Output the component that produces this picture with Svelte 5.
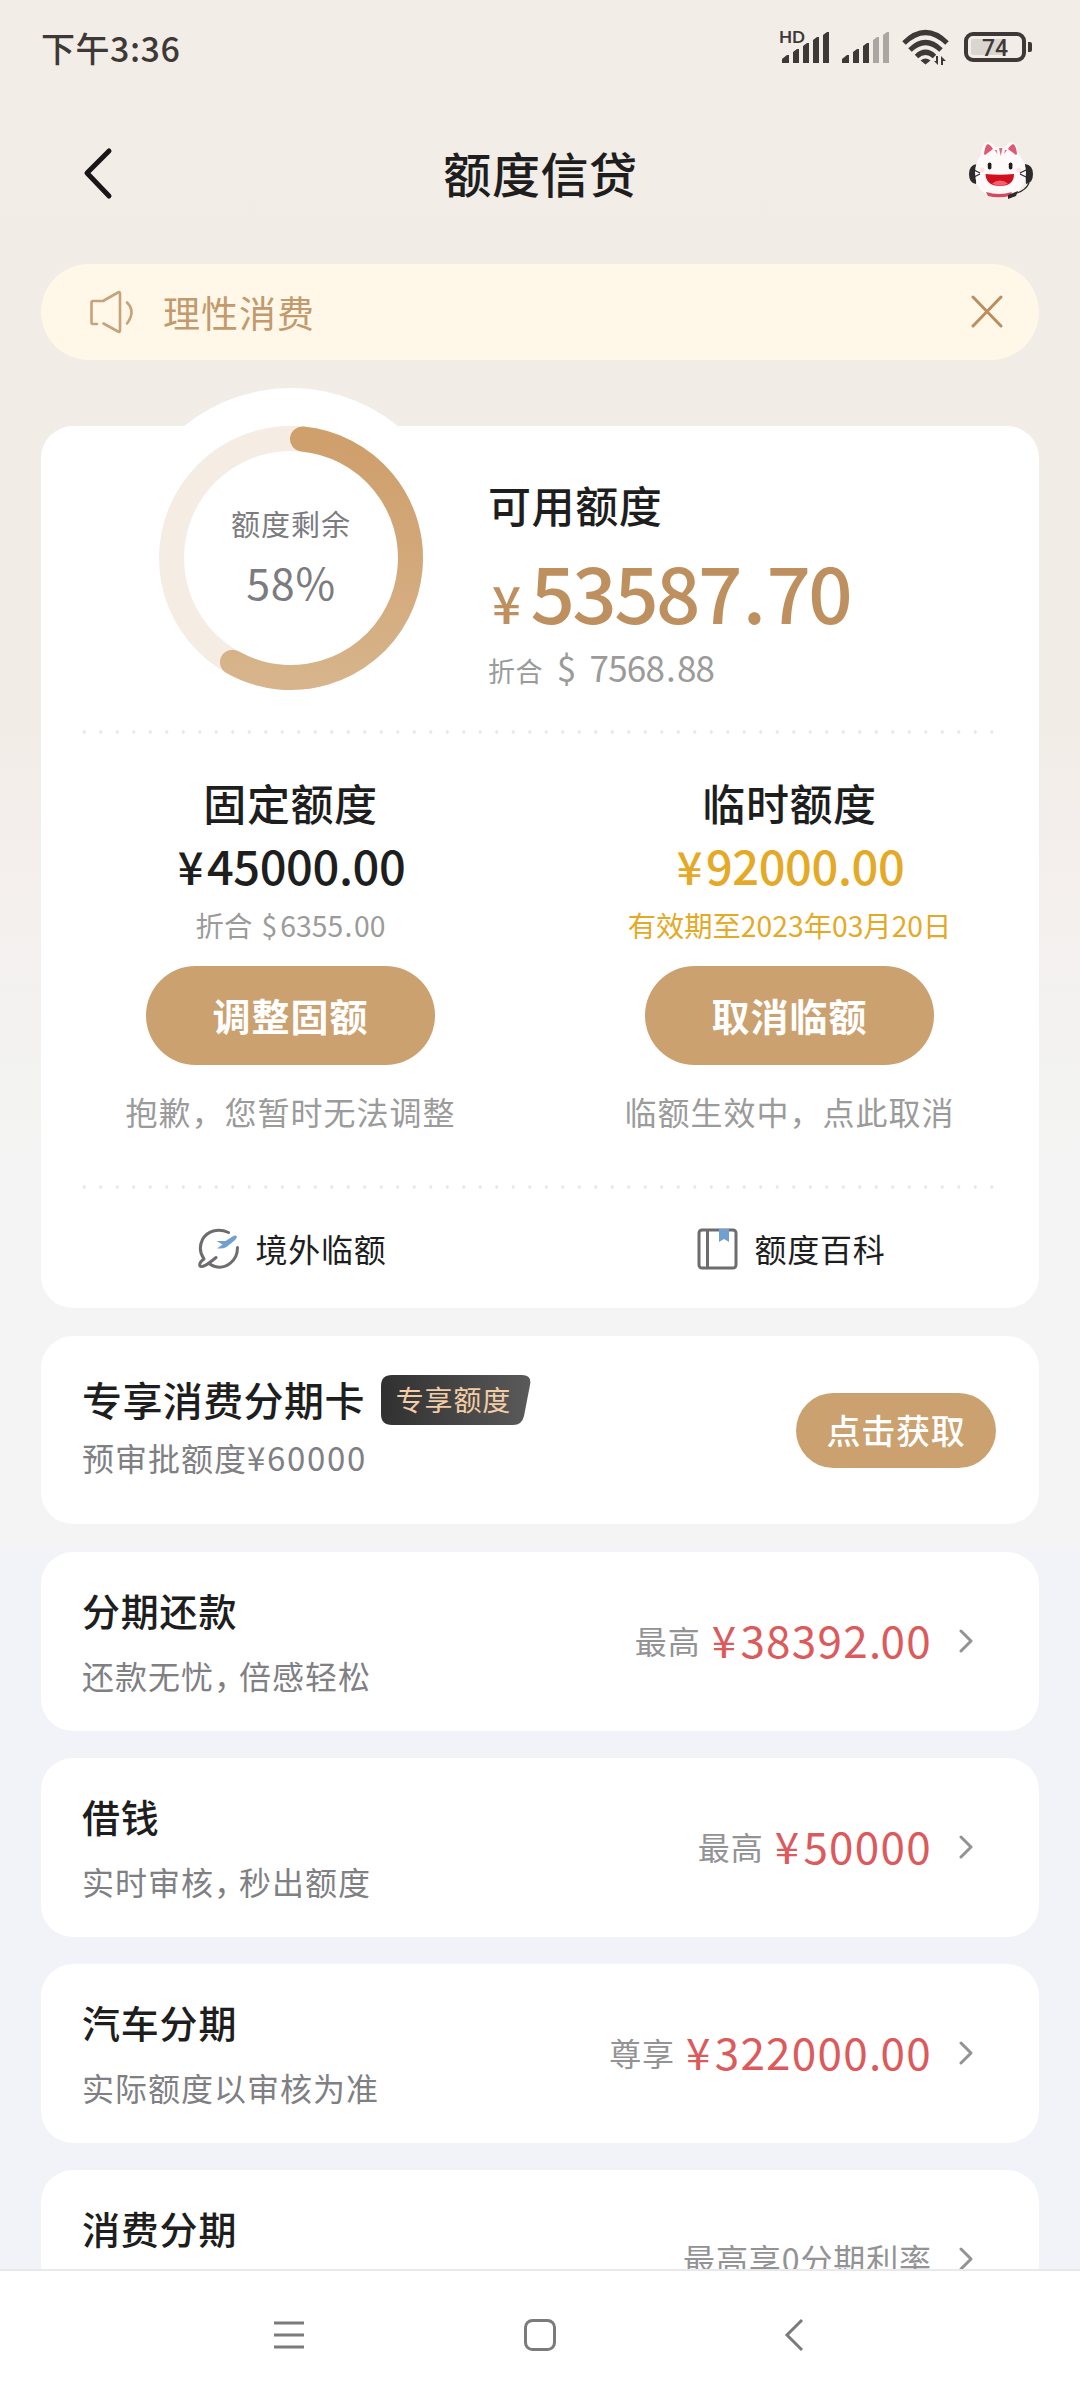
<script>
  const percent = 58;
  const radius = 119.5;
  const circumference = 2 * Math.PI * radius;

  const limits = [
    {
      title: "固定额度",
      value: "45000.00",
      note: "折合 ",
      usd: "6355.00",
      action: "调整固额",
      hint: "抱歉，您暂时无法调整",
      temporary: false,
    },
    {
      title: "临时额度",
      value: "92000.00",
      note: "有效期至2023年03月20日",
      usd: "",
      action: "取消临额",
      hint: "临额生效中，点此取消",
      temporary: true,
    },
  ];

  const products = [
    { title: "分期还款", note: "还款无忧，倍感轻松", label: "最高", value: "38392.00" },
    { title: "借钱", note: "实时审核，秒出额度", label: "最高", value: "50000" },
    { title: "汽车分期", note: "实际额度以审核为准", label: "尊享", value: "322000.00" },
    { title: "消费分期", note: "", label: "最高享0分期利率", value: "" },
  ];
</script>

{#snippet money(sign, value)}
  {@const parts = value.split(".")}
  <span class="sign">{sign}</span><span>{parts[0]}</span>{#if parts[1]}<span class="dot">.</span><span>{parts[1]}</span>{/if}
{/snippet}

<div class="screen">
  <div class="status">
    <span class="time">下午3:36</span>
    <svg class="status-icons" width="254" height="36" viewBox="0 0 254 36" fill="#3e3937">
      <text x="-1" y="15" class="hd">HD</text>
      <path d="M2 35v-4l5-4h2v8zM13 35v-11l4-3h2v14zM23 35v-17l4-3h2v20zM33 35v-23l4-3h2v26zM43 35v-28l4-3h2v31z" />
      <path d="M62 35v-4l5-4h2v8zM73 35v-11l4-3h2v14zM83 35v-17l4-3h2v20z" />
      <path fill="#aaa6a2" d="M93 35v-23l4-3h2v26zM103 35v-28l4-3h2v31z" />
      <g fill="none" stroke="#3e3937" stroke-width="5">
        <path d="M124 15q21.500-21 43 0M130 22q15.500-15 31 0M136.500 28.500q9-8.500 18 0" />
      </g>
      <path d="M140.500 32.500q5-4 10 0l-5 4zM158 28v9l-4-4h2v-5zM161 37v-9l5 5h-3v4z" />
      <rect x="186" y="6" width="58" height="26" rx="7" fill="none" stroke="#3e3937" stroke-width="4" />
      <rect x="191" y="11" width="35" height="16" rx="2" fill="#d9d6d2" />
      <path d="M248 14h2q2 0 2 2v6q0 2-2 2h-2z" />
      <text x="215" y="27.500" text-anchor="middle" class="level">74</text>
    </svg>
  </div>

  <header>
    <svg width="36" height="60" viewBox="0 0 36 60" fill="none" stroke="#191617" stroke-width="5" stroke-linecap="round" stroke-linejoin="round">
      <path d="M29 9L7 31L29 54" />
    </svg>
    <h1>额度信贷</h1>
    <svg width="64" height="60" viewBox="0 0 64 60">
      <path d="M8 22q-8 1-8 10t7 10zM56 22q8 1 8 10t-7 10z" fill="#2d2a2c" />
      <path d="M12 13Q13 0 19 0q5 1 7 5h10q3-4 6-5q7 1 8 13q7 8 7 18q-2 24-26 24T6 31q0-10 6-18z" fill="#fffafa" />
      <path d="M15 12q1-9 4-10q4 2 5 5l-8 6zM48 12q-1-9-4-10q-4 2-5 5l8 6z" fill="#df5972" />
      <path d="M30 6h3.500l-1.700 8zM25.500 8l2 0 1 4zM38 8l-2 0-1 4z" fill="#d96f80" />
      <rect x="18.800" y="20.500" width="3.600" height="7" rx="1.800" fill="#211b1d" />
      <rect x="39.800" y="20.500" width="3.600" height="7" rx="1.800" fill="#211b1d" />
      <circle cx="13" cy="28" r="2.500" fill="#fde3e5" />
      <circle cx="50" cy="28" r="2.500" fill="#fde3e5" />
      <path d="M16.500 32q14 1.500 28.500 0q0 12-14 12T16.500 32z" fill="#d0101f" />
      <path d="M23 41.500q8-6 16 0q-8 4.500-16 0z" fill="#f4606f" />
      <path d="M17 50q13 4 26 0l-2 4q-12 2.500-22 0z" fill="#d84861" />
      <path d="M5 28l6 3M5 35l6-3M57 28l-6 3M57 35l-6-3M60 41q-3 7-12 10" fill="none" stroke="#2d2a2c" stroke-width="1.300" />
      <path d="M39 53l10-4-2 5-8 3z" fill="#2d2a2c" />
    </svg>
  </header>

  <div class="notice">
    <svg width="46" height="44" viewBox="0 0 46 44" fill="none" stroke="#c7a27a" stroke-width="2.600" stroke-linecap="round" stroke-linejoin="round">
      <path d="M9 34H5q-1.500 0-1.500-1.500v-20Q3.500 11 5 11h10L30 2.500q2-1 2 1v37q0 2-2 1L15.500 33.500M39 12.500q9 9 0 21" />
    </svg>
    <span>理性消费</span>
    <svg width="34" height="34" viewBox="0 0 34 34" stroke="#bd8e5d" stroke-width="3" stroke-linecap="round">
      <path d="M3 2L31 31M31 2L3 31" />
    </svg>
  </div>

  <section class="card credit">
    <div class="overview">
      <div class="ring">
        <svg width="340" height="340" viewBox="0 0 340 340">
          <defs>
            <linearGradient id="gold" x1="0" y1="0" x2="1" y2="0">
              <stop offset="0" stop-color="#d7b48b" />
              <stop offset="1" stop-color="#cf9f6c" />
            </linearGradient>
          </defs>
          <circle cx="170" cy="170" r="170" fill="#fff" />
          <circle cx="170" cy="170" r={radius} fill="none" stroke="#f5ece4" stroke-width="25" />
          <circle
            cx="170"
            cy="170"
            r={radius}
            fill="none"
            stroke="url(#gold)"
            stroke-width="25"
            stroke-linecap="round"
            stroke-dasharray="{(circumference * (percent - 1.4)) / 100} {circumference}"
            transform="rotate(-84.500 170 170)"
          />
        </svg>
        <div class="ring-text">
          <span>额度剩余</span>
          <strong>{percent}%</strong>
        </div>
      </div>
      <div class="available">
        <h2>可用额度</h2>
        <p class="total">{@render money("¥", "53587.70")}</p>
        <p class="usd">折合 <b>{@render money("$", "7568.88")}</b></p>
      </div>
    </div>

    <div class="dots"></div>

    <div class="limits">
      {#each limits as limit}
        <div class="limit" class:temporary={limit.temporary}>
          <h2>{limit.title}</h2>
          <p class="value">{@render money("¥", limit.value)}</p>
          <p class="note">{limit.note}{#if limit.usd}{@render money("$", limit.usd)}{/if}</p>
          <button>{limit.action}</button>
          <p class="hint">{limit.hint}</p>
        </div>
      {/each}
    </div>

    <div class="dots"></div>

    <div class="links">
      <div class="link">
        <svg width="42" height="42" viewBox="0 0 42 42" fill="none" stroke="#6d6d70" stroke-width="3" stroke-linecap="round">
          <path d="M30.500 4.500C20-.5 9 3 4.500 11.500Q-.5 22 6 31M39.500 19.500C39.500 33 28 41.500 17 38.500Q13.500 37.500 10.500 35M6 31Q.5 35 2 38Q4.500 41 18 29.500" />
          <path d="M39 8.500q-.5 3-5 6l-5.500 4.500q-3 2-9.500 1.500l5.500-4-6-3.500h9l7-4.500q3-2 4.500 0z" fill="#729fd0" stroke="none" />
        </svg>
        <span>境外临额</span>
      </div>
      <div class="link">
        <svg width="42" height="44" viewBox="0 0 42 44" fill="none" stroke="#6d6d70" stroke-width="3">
          <rect x="2" y="3" width="37" height="38" rx="3" />
          <path d="M10.500 3v38" />
          <path d="M22 2h10v13l-5-3-5 3z" fill="#729fd0" stroke="none" />
        </svg>
        <span>额度百科</span>
      </div>
    </div>
  </section>

  <section class="card offer">
    <div>
      <div class="offer-head">
        <h3>专享消费分期卡</h3>
        <span class="badge">
          <svg width="150" height="50" viewBox="0 0 150 50">
            <defs>
              <linearGradient id="dark">
                <stop offset="0" stop-color="#303030" />
                <stop offset="1" stop-color="#5a5a5a" />
              </linearGradient>
            </defs>
            <path d="M11 0H141Q151 0 149 10L143 41Q141 50 132 50H11Q0 50 0 39V11Q0 0 11 0z" fill="url(#dark)" />
          </svg>
          <em>专享额度</em>
        </span>
      </div>
      <p>预审批额度<span class="preset">¥60000</span></p>
    </div>
    <button>点击获取</button>
  </section>

  {#each products as item}
    <section class="card product">
      <div class="info">
        <h3>{item.title}</h3>
        <p>{#each item.note.split("，") as part, i}{#if i}<i>，</i>{/if}{part}{/each}</p>
      </div>
      <span class="label">{item.label}</span>
      {#if item.value}
        <span class="price">{@render money("¥", item.value)}</span>
      {/if}
      <svg width="16" height="26" viewBox="0 0 16 26" fill="none" stroke="#939396" stroke-width="3" stroke-linecap="round" stroke-linejoin="round">
        <path d="M3 2L13 12L3 22" />
      </svg>
    </section>
  {/each}

  <nav>
    <svg width="32" height="34" viewBox="0 0 32 34" stroke="#7b7b7b" stroke-width="3">
      <path d="M1 5H31M1 17H31M1 29H31" />
    </svg>
    <svg class="home" width="34" height="34" viewBox="0 0 34 34" fill="none" stroke="#7b7b7b" stroke-width="3">
      <rect x="2.500" y="2.500" width="29" height="29" rx="7" />
    </svg>
    <svg width="20" height="34" viewBox="0 0 20 34" fill="none" stroke="#7b7b7b" stroke-width="3">
      <path d="M18 2L3 17L18 32" />
    </svg>
  </nav>
</div>

<style>
  :global(body) {
    margin: 0;
    background: #fff;
  }

  .screen {
    width: 1080px;
    height: 2400px;
    position: relative;
    overflow: hidden;
    box-sizing: border-box;
    padding: 0 41px;
    font-family: "Noto Sans CJK SC", sans-serif;
    color: #1e1e1e;
    background: linear-gradient(#f2ede7 0, #f1ece5 700px, #f4efed 860px, #f3f3f2 1080px, #f4f4f4 1200px, #f4f4f4 1540px, #f2f3f8 1556px);
  }

  h1, h2, h3, p {
    margin: 0;
    font-weight: 500;
    white-space: nowrap;
  }

  svg {
    display: block;
    flex: none;
  }

  button {
    border: none;
    padding: 0 0 2px;
    font-family: inherit;
    color: #fff;
    background: #cba170;
  }

  .status {
    height: 100px;
    display: flex;
    justify-content: space-between;
    box-sizing: border-box;
    padding-top: 28px;
  }

  .time {
    font-size: 34px;
    line-height: 40px;
    font-weight: 500;
    letter-spacing: 0.500px;
    color: #3e3937;
  }

  .status-icons {
    margin-right: 5px;
    overflow: visible;
  }

  .hd {
    font: 700 17px Lato, sans-serif;
  }

  .level {
    font: 500 23px Roboto, sans-serif;
  }

  header {
    height: 150px;
    display: flex;
    align-items: center;
    justify-content: space-between;
    box-sizing: border-box;
    padding: 0 6px 7px 39px;
  }

  header h1 {
    font-size: 48px;
    line-height: 60px;
    letter-spacing: 0.600px;
    margin: 0 4px 0 0;
  }

  .notice {
    height: 96px;
    margin-top: 14px;
    border-radius: 48px;
    background: #fff8e8;
    display: flex;
    align-items: center;
    padding: 0 35px 0 47px;
    color: #c39a6d;
    font-size: 37px;
  }

  .notice span {
    flex: 1;
    margin-left: 29px;
    letter-spacing: 1px;
  }

  .card {
    background: #fff;
    border-radius: 32px;
    box-sizing: border-box;
  }

  .credit {
    height: 882px;
    margin-top: 66px;
  }

  .overview {
    height: 304px;
    display: flex;
  }

  .ring {
    position: relative;
    width: 340px;
    margin: -38px 0 0 80px;
  }

  .ring-text {
    position: absolute;
    left: 0;
    top: 114px;
    width: 340px;
    display: flex;
    flex-direction: column;
    align-items: center;
    color: #7b7b80;
  }

  .ring-text span {
    font-size: 29px;
    line-height: 42px;
    letter-spacing: 1px;
  }

  .ring-text strong {
    font-size: 43px;
    line-height: 60px;
    margin-top: 7px;
    font-weight: 400;
    letter-spacing: 0.800px;
  }

  .available {
    margin-left: 27px;
    padding-top: 48px;
  }

  h2 {
    font-size: 43px;
    line-height: 60px;
    letter-spacing: 0.600px;
  }

  .total {
    font-size: 78px;
    line-height: 80px;
    margin-top: 16px;
    letter-spacing: -2.600px;
    color: #be905f;
  }

  .total .sign {
    font-size: 51px;
    margin: 0 12px 0 4px;
  }

  .total .dot {
    margin: 0 3px;
  }

  .usd {
    font-size: 27px;
    line-height: 40px;
    margin-top: 5px;
    letter-spacing: 0.600px;
    color: #9b9b9b;
    font-weight: 400;
  }

  .usd b {
    font-weight: 400;
    font-size: 35px;
    letter-spacing: -0.800px;
  }

  .usd .sign {
    margin: 0 14px 0 7px;
  }

  .usd .dot {
    margin: 0 2px;
  }

  .dots {
    height: 4px;
    margin: 0 35px;
    background: radial-gradient(circle, #e9e9e9 1.500px, transparent 2px) 0 0 / 16.500px 4px;
  }

  .limits {
    height: 451px;
    display: grid;
    grid-template-columns: 1fr 1fr;
  }

  .limit {
    display: flex;
    flex-direction: column;
    align-items: center;
    padding-top: 38px;
  }

  .value {
    font-size: 47px;
    line-height: 60px;
    margin-top: 3px;
    letter-spacing: -0.400px;
  }

  .value .sign {
    font-size: 45px;
    margin: 0 4px 0 2px;
  }

  .note {
    font-size: 28.300px;
    line-height: 40px;
    margin-top: 9px;
    font-weight: 400;
    color: #9b9b9b;
  }

  .note .sign {
    margin: 0 3px;
  }

  .note .dot {
    margin: 0 1.500px;
  }

  .temporary .value,
  .temporary .note {
    color: #e4aa27;
  }

  .limit button {
    width: 289px;
    height: 99px;
    border-radius: 50px;
    margin-top: 21px;
    font-size: 38px;
    font-weight: 700;
    letter-spacing: 1px;
  }

  .hint {
    font-size: 32px;
    line-height: 48px;
    margin-top: 22px;
    letter-spacing: 1px;
    font-weight: 400;
    color: #9b9b9b;
  }

  .links {
    display: grid;
    grid-template-columns: 1fr 1fr;
    padding-top: 37px;
  }

  .link {
    display: flex;
    align-items: center;
    justify-content: center;
    gap: 16px;
    padding-left: 3px;
    font-size: 32px;
    line-height: 48px;
    letter-spacing: 0.700px;
  }

  .link span {
    margin-top: -2px;
  }

  .offer {
    height: 188px;
    margin: 28px 0;
    padding: 0 43px 0 41px;
    display: flex;
    align-items: center;
    justify-content: space-between;
  }

  .offer-head {
    display: flex;
    align-items: center;
    gap: 16px;
    margin: -8px 0 4px;
  }

  .offer h3 {
    font-size: 40px;
    line-height: 60px;
    margin-top: -2px;
    letter-spacing: 0.400px;
  }

  .badge {
    position: relative;
  }

  .badge em {
    position: absolute;
    left: 15px;
    top: 4px;
    font-size: 28px;
    line-height: 40px;
    letter-spacing: 0.800px;
    font-style: normal;
    white-space: nowrap;
    color: #f2cda5;
  }

  .offer p,
  .info p {
    font-size: 32px;
    line-height: 48px;
    letter-spacing: 1px;
    font-weight: 400;
    color: #7f7f84;
  }

  .offer .preset {
    font-size: 33px;
    letter-spacing: 1.700px;
  }

  .offer button {
    width: 200px;
    height: 75px;
    border-radius: 38px;
    font-size: 34px;
    font-weight: 500;
    letter-spacing: 0.800px;
  }

  .product {
    height: 179px;
    margin-bottom: 27px;
    padding: 0 65px 0 41px;
    display: flex;
    align-items: center;
  }

  .info {
    flex: 1;
    align-self: flex-start;
    padding-top: 28px;
  }

  .info h3 {
    font-size: 38px;
    line-height: 60px;
    letter-spacing: 0.800px;
  }

  .info p {
    margin-top: 11px;
  }

  .info i {
    font-style: normal;
    letter-spacing: -7px;
  }

  .label {
    font-size: 32px;
    letter-spacing: 0.900px;
    margin-top: -4px;
    color: #939396;
  }

  .price {
    margin: -6px 0 0 11px;
    font-size: 44px;
    line-height: 60px;
    letter-spacing: 1.300px;
    color: #dc5a5c;
  }

  .price .sign {
    margin-right: 3px;
  }

  .price .dot {
    margin-right: -2px;
  }

  .product svg {
    margin-left: 26px;
  }

  nav {
    position: absolute;
    left: 0;
    bottom: 0;
    width: 1080px;
    height: 131px;
    box-sizing: border-box;
    border-top: 2px solid #e9e9eb;
    padding: 0 276px 2px 273px;
    display: flex;
    align-items: center;
    justify-content: space-between;
    background: #fff;
  }

  .home {
    margin-right: 9px;
  }
</style>
